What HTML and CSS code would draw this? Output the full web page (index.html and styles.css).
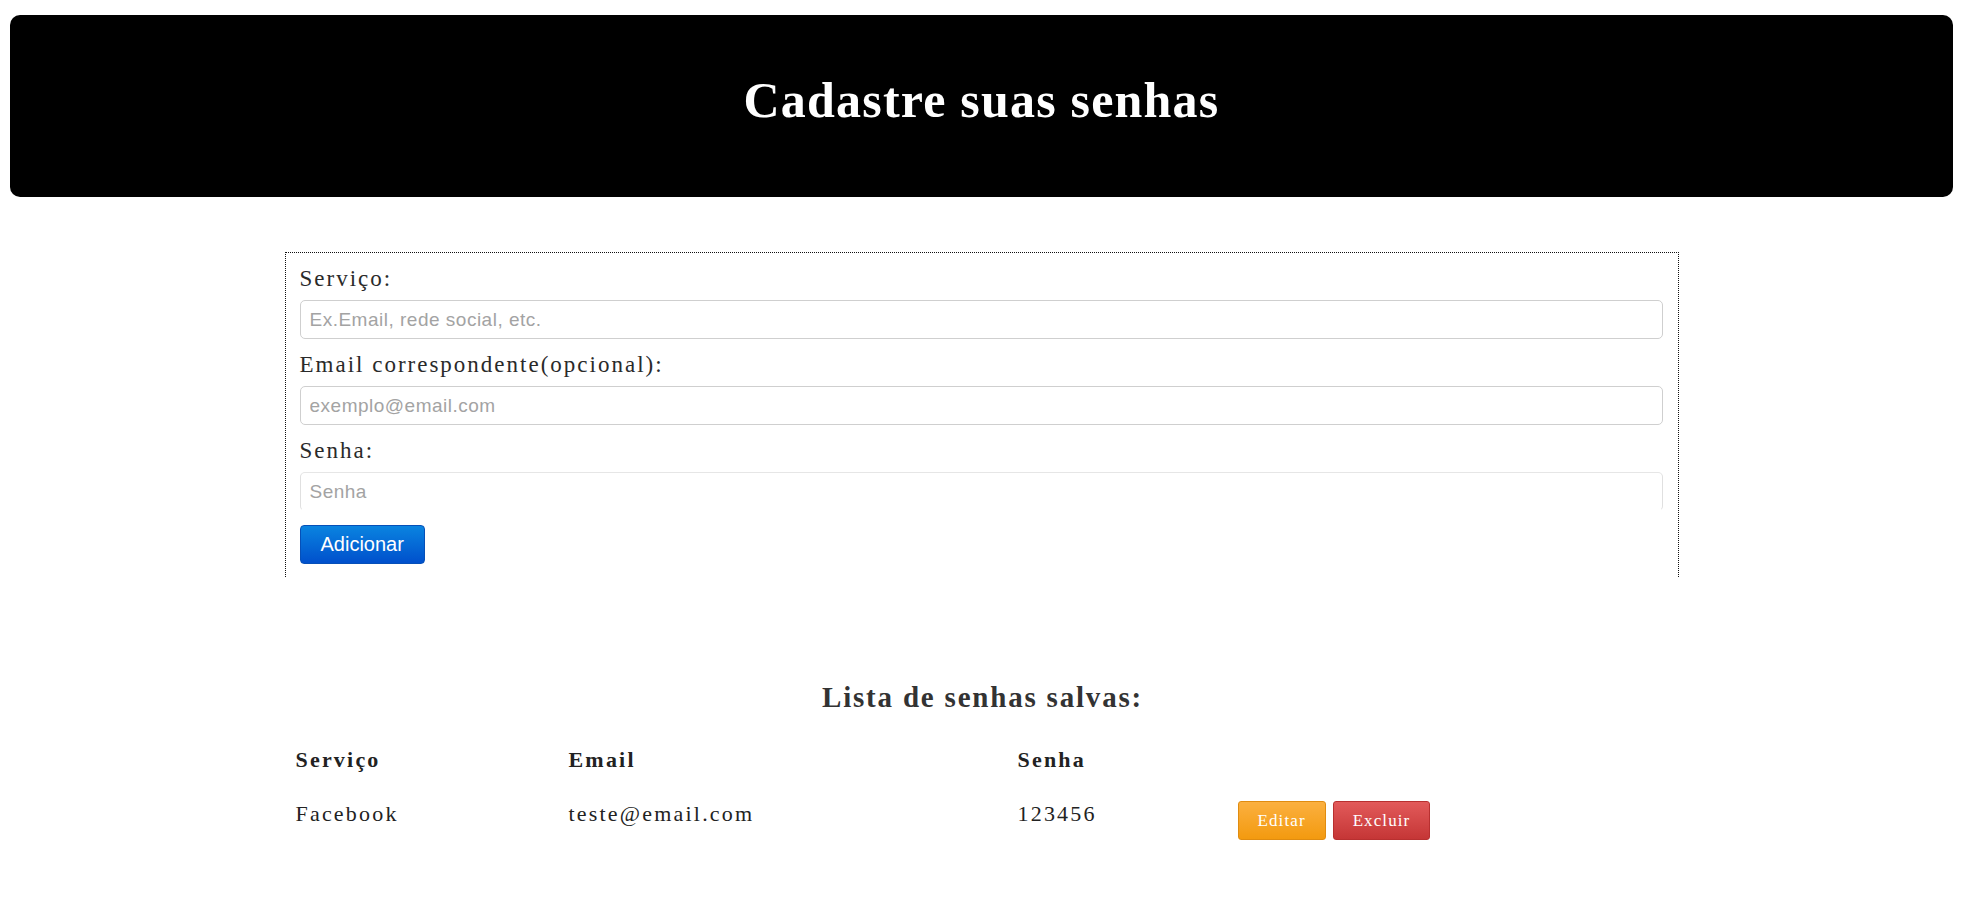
FILE: index.html
```html
<!DOCTYPE html>
<html lang="pt-BR">
<head>
<meta charset="utf-8">
<title>Cadastre suas senhas</title>
<link rel="stylesheet" href="styles.css">
</head>
<body>
<header class="topo">
  <h1 class="topo-titulo">Cadastre suas senhas</h1>
</header>

<form class="cadastro">
  <label class="rotulo" for="servico">Serviço:</label>
  <input class="campo" id="servico" type="text" placeholder="Ex.Email, rede social, etc.">
  <label class="rotulo" for="email">Email correspondente(opcional):</label>
  <input class="campo" id="email" type="text" placeholder="exemplo@email.com">
  <label class="rotulo" for="senha">Senha:</label>
  <input class="campo campo-senha" id="senha" type="text" placeholder="Senha">
  <button class="btn-adicionar" type="button">Adicionar</button>
</form>

<section class="lista">
  <h2 class="lista-titulo">Lista de senhas salvas:</h2>
  <div class="tabela">
    <div class="linha linha-cab">
      <div class="cel">Serviço</div>
      <div class="cel">Email</div>
      <div class="cel">Senha</div>
      <div class="cel"></div>
    </div>
    <div class="linha">
      <div class="cel">Facebook</div>
      <div class="cel">teste@email.com</div>
      <div class="cel">123456</div>
      <div class="cel acoes">
        <button class="btn btn-editar" type="button">Editar</button>
        <button class="btn btn-excluir" type="button">Excluir</button>
      </div>
    </div>
  </div>
</section>
</body>
</html>
```

FILE: styles.css
```css
html, body {
  margin: 0;
  padding: 0;
  background: #ffffff;
}

body {
  padding: 15px 26px 0 10px;
  font-family: "Liberation Serif", "Times New Roman", serif;
  color: #333;
}

.topo {
  background: #000;
  border-radius: 10px;
  height: 182px;
  box-sizing: border-box;
  padding-top: 55px;
  text-align: center;
}

.topo-titulo {
  margin: 0;
  color: #fff;
  font-size: 50px;
  line-height: 60px;
  font-weight: bold;
  letter-spacing: 1.2px;
}

.cadastro {
  width: 1394px;
  box-sizing: border-box;
  margin: 55px auto 0;
  border: 1px dotted #111;
  border-bottom: none;
  padding: 0 15px 13px 14px;
  display: flex;
  flex-direction: column;
  align-items: flex-start;
}

.rotulo {
  display: block;
  margin-top: 12px;
  font-size: 23px;
  line-height: 28px;
  letter-spacing: 2px;
  color: #2a2a2a;
}

.campo {
  display: block;
  width: 100%;
  height: 39px;
  box-sizing: border-box;
  margin: 7px 0 0;
  border: 1px solid #cfcfcf;
  border-radius: 5px;
  padding: 0 9px;
  font-family: "Liberation Sans", Arial, sans-serif;
  font-size: 19px;
  letter-spacing: 0.5px;
  color: #333;
  background: #fff;
}

.campo::placeholder {
  color: #a3a3a3;
}

.campo-senha {
  border-color: #e6e6e6 #e0e0e0 #fff #e0e0e0;
}

.btn-adicionar {
  margin-top: 14px;
  height: 39px;
  padding: 0 20px;
  border: 1px solid #0650b8;
  border-radius: 4px;
  background: linear-gradient(#0a84e0, #0050cc);
  color: #fff;
  font-family: "Liberation Sans", Arial, sans-serif;
  font-size: 20px;
}

.lista {
  margin-top: 102px;
}

.lista-titulo {
  margin: 0;
  text-align: center;
  font-size: 29px;
  line-height: 36px;
  font-weight: bold;
  letter-spacing: 1.8px;
  color: #333;
  padding-left: 2px;
}

.tabela {
  width: 1394px;
  margin: 31px auto 0;
  color: #222;
}

.linha {
  display: grid;
  grid-template-columns: 273px 449px 220px auto;
  font-size: 22px;
  line-height: 28px;
  letter-spacing: 2.2px;
}

.linha-cab {
  font-weight: bold;
  height: 54px;
}

.cel {
  padding-left: 11px;
}

.acoes {
  display: flex;
  gap: 7px;
  padding-top: 1px;
}

.btn {
  height: 39px;
  padding: 0 19px;
  border-radius: 3px;
  color: #fff;
  font-family: "Liberation Serif", "Times New Roman", serif;
  font-size: 17px;
  letter-spacing: 1.1px;
}

.btn-editar {
  background: linear-gradient(#fbb040, #f39a0f);
  border: 1px solid #e08c10;
}

.btn-excluir {
  background: linear-gradient(#e25a5a, #c53636);
  border: 1px solid #b83030;
}
```
